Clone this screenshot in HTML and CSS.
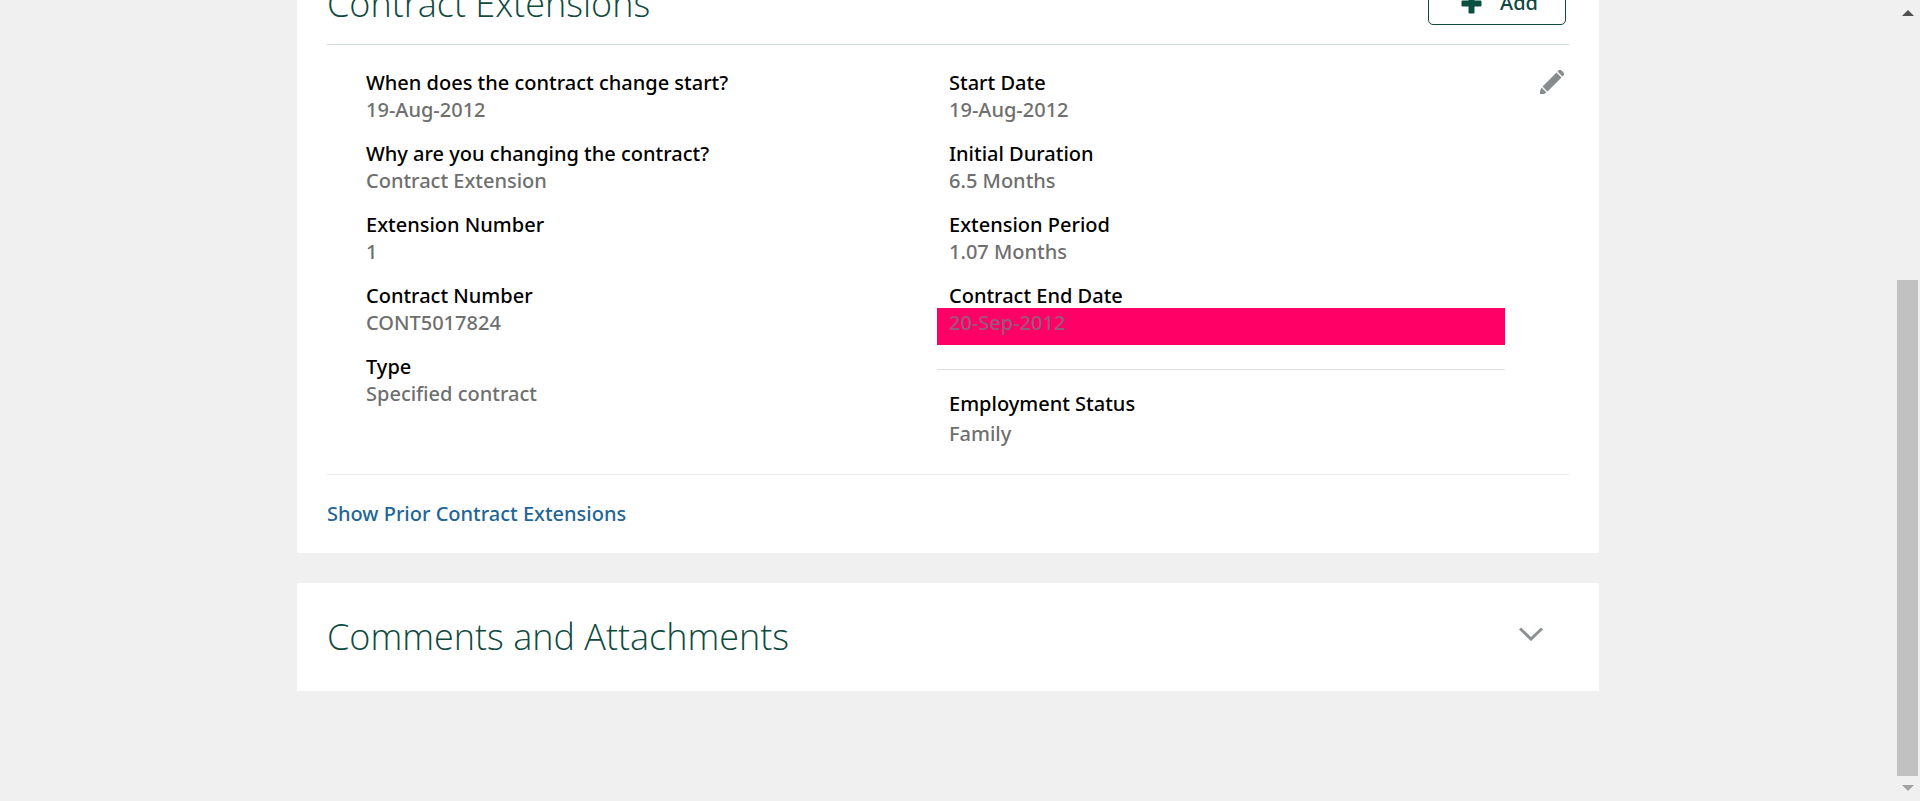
FILE: index.html
```html
<!DOCTYPE html>
<html lang="en">
<head>
<meta charset="utf-8">
<title>Contract Extensions</title>
<link rel="stylesheet" href="styles.css">
</head>
<body>
<div class="page">
  <main class="content">
    <section class="card">
      <header class="card-header">
        <h2 class="title">Contract Extensions</h2>
        <button class="add-button" type="button">
          <svg class="plus" viewBox="0 0 21 21" aria-hidden="true"><path d="M7.500 1.500a1 1 0 0 1 1-1h4a1 1 0 0 1 1 1v6h6a1 1 0 0 1 1 1v4a1 1 0 0 1-1 1h-6v6a1 1 0 0 1-1 1h-4a1 1 0 0 1-1-1v-6h-6a1 1 0 0 1-1-1v-4a1 1 0 0 1 1-1h6z"/></svg>
          <span>Add</span>
        </button>
      </header>
      <div class="details">
        <dl class="fields">
          <div class="field"><dt>When does the contract change start?</dt><dd>19-Aug-2012</dd></div>
          <div class="field"><dt>Why are you changing the contract?</dt><dd>Contract Extension</dd></div>
          <div class="field"><dt>Extension Number</dt><dd>1</dd></div>
          <div class="field"><dt>Contract Number</dt><dd>CONT5017824</dd></div>
          <div class="field"><dt>Type</dt><dd>Specified contract</dd></div>
        </dl>
        <dl class="fields">
          <div class="field"><dt>Start Date</dt><dd>19-Aug-2012</dd></div>
          <div class="field"><dt>Initial Duration</dt><dd>6.5 Months</dd></div>
          <div class="field"><dt>Extension Period</dt><dd>1.07 Months</dd></div>
          <div class="field"><dt>Contract End Date</dt><dd class="highlight">20-Sep-2012</dd></div>
          <div class="field status"><dt>Employment Status</dt><dd>Family</dd></div>
        </dl>
        <button class="icon-button edit" type="button" aria-label="Edit">
          <svg width="24" height="24" viewBox="0 0 24 24" aria-hidden="true"><path fill="#878c8e" d="M17.500 1.500 19 0h2l3 3v2l-1.500 1.500zM16.500 2.500l5 5L7.500 21.500l-5-5zM1.500 17.500l5 5L4 24H0v-3z"/></svg>
        </button>
      </div>
      <footer class="card-footer"><a class="link" href="#">Show Prior Contract Extensions</a></footer>
    </section>
    <section class="card comments">
      <h2 class="title">Comments and Attachments</h2>
      <button class="icon-button expand" type="button" aria-label="Expand comments and attachments">
        <svg width="24" height="14" viewBox="0 0 24 14" aria-hidden="true"><path fill="none" stroke="#8c9193" stroke-width="3" d="M1 1.500 12 12 23 1.500"/></svg>
      </button>
    </section>
  </main>
  <div class="scrollbar" aria-hidden="true">
    <svg class="arrow" width="12" height="6" viewBox="0 0 12 6"><path fill="#505050" d="M6 0l6 6H0z"/></svg>
    <div class="thumb"></div>
    <svg class="arrow" width="12" height="6" viewBox="0 0 12 6"><path fill="#a3a3a3" d="M0 0h12L6 6z"/></svg>
  </div>
</div>
</body>
</html>
```
FILE: styles.css
```css
* { box-sizing: border-box; }

body {
  margin: 0;
  background: #f0f0f0;
  color: #000;
  font: 500 20px/26px "Noto Sans", "Open Sans", sans-serif;
}

.page {
  display: flex;
  height: 100vh;
  overflow: hidden;
}

.content {
  flex: 1;
  display: flex;
  flex-direction: column;
  align-items: center;
  gap: 30px;
}

.card {
  width: 100%;
  max-width: 1302px;
  padding: 0 30px;
  background: #fff;
}

.card-header {
  display: flex;
  justify-content: space-between;
  align-items: flex-end;
  height: 45px;
  border-bottom: 1px solid #d3dcdd;
  padding: 0 3px 19px 0;
}

.title {
  margin: 0;
  color: #0f4a3f;
  font: 300 36px/48px "Open Sans", "Noto Sans", sans-serif;
}

.card-header .title { margin-bottom: -3px; }

.add-button {
  display: flex;
  align-items: center;
  justify-content: center;
  gap: 18px;
  width: 138px;
  height: 46px;
  padding: 2px 0 0 5px;
  border: 1px solid #0f4a3f;
  border-radius: 5px;
  background: #fff;
  color: #0f4a3f;
  font: inherit;
}

.plus {
  width: 21px;
  height: 21px;
  fill: #0b4f40;
}

.details {
  display: grid;
  grid-template-columns: 1fr 1fr 49px;
  column-gap: 15px;
  padding: 16px 0 18px 27px;
  border-bottom: 1px solid #ececec;
}

.fields { margin: 0; }

.field dt {
  padding: 10px 12px 0;
  line-height: 24px;
}

.field dd {
  margin: 0;
  padding: 0 12px 7px;
  color: #6f6f6f;
  line-height: 30px;
}

.field .highlight {
  background: #ff0066;
  color: #99597a;
}

.field.status {
  margin-top: 24px;
  border-top: 1px solid #dedede;
  padding-top: 12px;
}

.status dd { padding-top: 3px; }

.icon-button {
  display: flex;
  padding: 0;
  border: 0;
  background: none;
}

.edit {
  justify-self: end;
  align-self: start;
  margin: 9px 5px 0 0;
}

.card-footer { padding: 26px 0 26px; }

.link {
  color: #1f6697;
  text-decoration: none;
}

.comments {
  display: flex;
  align-items: center;
  justify-content: space-between;
  min-height: 108px;
  padding-right: 56px;
}

.expand { margin-bottom: 7px; }

.scrollbar {
  display: flex;
  flex-direction: column;
  align-items: center;
  width: 24px;
  padding: 10px 2px 10px 1px;
}

.arrow { flex: none; }

.thumb {
  flex: 1;
  align-self: stretch;
  margin: 264px 0 9px;
  background: #c1c1c1;
}
```
